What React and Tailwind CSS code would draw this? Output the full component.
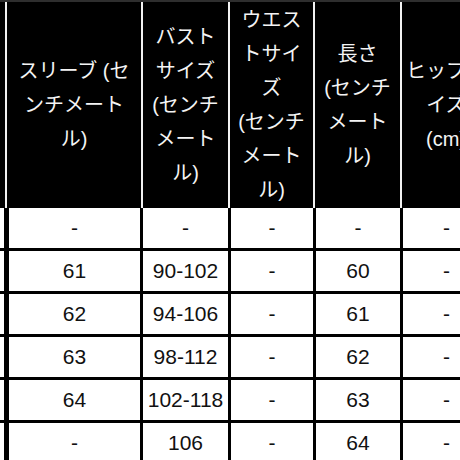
import React from "react";

const font = { fontFamily: '"Liberation Sans", Arial, "Noto Sans CJK JP", sans-serif' };

// header labels, one entry per visual line
const headers = [
  { w: "w-[136px]", lines: ["スリーブ (セ", "ンチメート", "ル)"] },
  { w: "w-[87px]", lines: ["バスト", "サイズ", "(センチ", "メート", "ル)"] },
  { w: "w-[85px]", lines: ["ウエス", "トサイ", "ズ", "(センチ", "メート", "ル)"] },
  { w: "w-[87px]", lines: ["長さ", "(センチ", "メート", "ル)"] },
  { w: "w-[90px]", lines: ["ヒップサ", "イズ", "(cm)"] },
];

const rows = [
  ["-", "-", "-", "-", "-"],
  ["61", "90-102", "-", "60", "-"],
  ["62", "94-106", "-", "61", "-"],
  ["63", "98-112", "-", "62", "-"],
  ["64", "102-118", "-", "63", "-"],
  ["-", "106", "-", "64", "-"],
];

const bodyWidths = ["w-[136px] border-l-[5px]", "w-[88px] border-l-[3px]", "w-[85px] border-l-[3px]", "w-[87px] border-l-[3px]", "w-[90px] border-l-[3px]"];

export default function App() {
  return (
    <div className="w-[460px] h-[460px] overflow-hidden bg-white" style={font}>
      <div className="w-[600px]">
        {/* header */}
        <div className="h-[208px] bg-black border-t-2 border-[#2e2e2e] flex">
          <div className="w-[5px] shrink-0" />
          {headers.map((h, i) => (
            <div
              key={i}
              className={`${h.w} shrink-0 border-l-2 border-[#f2f2f2] flex flex-col items-center justify-center text-[20px] leading-[34px] text-[#f4f4f4] whitespace-nowrap`}
            >
              {h.lines.map((l, j) => (
                <span key={j}>{l}</span>
              ))}
            </div>
          ))}
        </div>

        {/* body */}
        {rows.map((r, i) => (
          <div key={i} className="h-[43px] flex border-b-[3px] border-black">
            <div className="w-[4px] shrink-0 bg-white" />
            {r.map((v, j) => (
              <div
                key={j}
                className={`${bodyWidths[j]} shrink-0 border-black flex items-center justify-center text-[21px] text-[#111]`}
              >
                {v}
              </div>
            ))}
          </div>
        ))}
      </div>
    </div>
  );
}
